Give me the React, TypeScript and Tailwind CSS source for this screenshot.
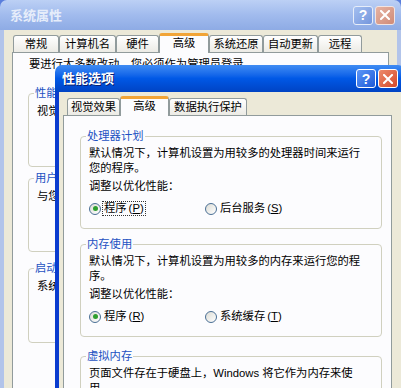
import React from 'react';

type TabProps = { label: string; w: string; active?: boolean };

const Tab: React.FC<TabProps> = ({ label, w, active }) =>
  active ? (
    <div className={`relative z-10 -mb-px flex h-[20px] items-center justify-center rounded-t-[3px] border-x border-t-[3px] border-x-[#919b9c] border-t-[#f1a437] bg-[#fcfcfe] pb-[2px] ${w}`}>
      {label}
    </div>
  ) : (
    <div className={`flex h-[17px] items-center justify-center rounded-t-[3px] border-x border-t border-[#919b9c] bg-gradient-to-b from-white to-[#ecebe5] ${w}`}>
      {label}
    </div>
  );

const CloseGlyph: React.FC = () => (
  <svg width="10" height="10" viewBox="0 0 10 10">
    <path d="M1 1 L9 9 M9 1 L1 9" stroke="white" strokeWidth="2" strokeLinecap="square" />
  </svg>
);

const TitleButtons: React.FC<{ active?: boolean }> = ({ active }) => (
  <div className="ml-auto flex gap-[2px]">
    <div
      className={`flex h-[19px] w-[20px] items-center justify-center rounded-[3px] border text-[14px] font-bold leading-none text-white ${
        active ? 'border-white bg-gradient-to-br from-[#5c96f7] to-[#1f5ad8]' : 'border-[#e6edf9] bg-gradient-to-br from-[#a4bff0] to-[#7596dc]'
      }`}
    >
      ?
    </div>
    <div
      className={`flex h-[19px] w-[20px] items-center justify-center rounded-[3px] border ${
        active ? 'border-white bg-gradient-to-br from-[#ec8a6b] to-[#d4482a]' : 'border-[#f1e4e2] bg-gradient-to-br from-[#e6b3a3] to-[#cf8b78]'
      }`}
    >
      <CloseGlyph />
    </div>
  </div>
);

const GroupBox: React.FC<{ label: string; className?: string; children?: React.ReactNode }> = ({ label, className, children }) => (
  <div className={`relative rounded-[4px] border border-[#d0d0bf] ${className ?? ''}`}>
    <span className="absolute -top-[8px] left-[5px] bg-[#fcfcfe] px-[1px] leading-[15px] text-[#1d52c2]">{label}</span>
    {children}
  </div>
);

const Radio: React.FC<{ label: string; mn: string; checked?: boolean; focused?: boolean }> = ({ label, mn, checked, focused }) => (
  <div className="flex items-center">
    <span className="flex h-[12px] w-[12px] items-center justify-center rounded-full border border-[#4a6f95] bg-gradient-to-br from-[#dcdcd5] to-white">
      {checked && <span className="h-[5px] w-[5px] rounded-full bg-[#2e9f2e]" />}
    </span>
    <span className={`ml-[1px] flex h-[15px] items-center border border-dotted px-[1px] ${focused ? 'border-[#333]' : 'border-transparent'}`}>
      {label}
      <span className="ml-[2px]">
        (<span className="underline">{mn}</span>)
      </span>
    </span>
  </div>
);

const PerfGroup: React.FC<{ label: string; lines: string[]; r1: [string, string]; r2: [string, string]; className?: string }> = ({
  label,
  lines,
  r1,
  r2,
  className,
}) => (
  <GroupBox label={label} className={`pb-[11px] pl-[8px] pt-[9px] ${className ?? ''}`}>
    {lines.map((l) => (
      <div key={l}>{l}</div>
    ))}
    <div className="mt-[3px]">调整以优化性能：</div>
    <div className="mt-[6px] flex h-[17px] items-center">
      <div className="w-[116px]">
        <Radio label={r1[0]} mn={r1[1]} checked focused={r1[1] === 'P'} />
      </div>
      <Radio label={r2[0]} mn={r2[1]} />
    </div>
  </GroupBox>
);

const BackWindow: React.FC = () => (
  <div className="absolute left-0 top-0 flex h-[400px] w-[401px] flex-col">
    <div className="flex h-[30px] shrink-0 items-center rounded-t-[7px] bg-gradient-to-b from-[#bcd0f5] via-[#a1bbed] to-[#8eabe5] pl-[10px] pr-[6px]">
      <span className="text-[13px] font-bold text-[#e6edfa]">系统属性</span>
      <TitleButtons />
    </div>
    <div className="flex-1 border-x-[4px] border-[#b2c4ea] bg-[#ece9d8] pl-[8px] pt-[3px]">
      <div className="flex h-[19px] items-end pl-[1px]">
        <Tab label="常规" w="w-[46px]" />
        <Tab label="计算机名" w="w-[57px]" />
        <Tab label="硬件" w="w-[43px]" />
        <Tab label="高级" w="w-[50px]" active />
        <Tab label="系统还原" w="w-[54px]" />
        <Tab label="自动更新" w="w-[55px]" />
        <Tab label="远程" w="w-[44px]" />
      </div>
      <div className="h-[340px] w-[377px] border border-[#919b9c] bg-[#fcfcfe] pl-[15px] pt-[4px]">
        <div className="pl-[1px]">要进行大多数改动，您必须作为管理员登录。</div>
        <GroupBox label="性能" className="mt-[21px] h-[74px] w-[345px] pl-[8px] pt-[10px]">
          <div>视觉效果，处理器计划，内存使用，以及虚拟内存</div>
        </GroupBox>
        <GroupBox label="用户配置文件" className="mt-[11px] h-[74px] w-[345px] pl-[8px] pt-[10px]">
          <div>与您登录有关的桌面设置</div>
        </GroupBox>
        <GroupBox label="启动和故障恢复" className="mt-[16px] h-[75px] w-[345px] pl-[8px] pt-[10px]">
          <div>系统启动、系统失败和调试信息</div>
        </GroupBox>
      </div>
    </div>
  </div>
);

const FrontWindow: React.FC = () => (
  <div className="absolute left-[55px] top-[65px] flex h-[360px] w-[350px] flex-col">
    <div className="flex h-[27px] shrink-0 items-center rounded-t-[7px] bg-gradient-to-b from-[#3f8cf3] via-[#0058e6] to-[#0043c4] pl-[7px] pr-[7px]">
      <span className="text-[13px] font-bold text-white [text-shadow:1px_1px_#0a1e6e]">性能选项</span>
      <TitleButtons active />
    </div>
    <div className="flex-1 border-l-[4px] border-[#0a3ccf] bg-[#ece9d8] pl-[4px] pt-[3px]">
      <div className="flex h-[20px] items-end pl-[4px]">
        <Tab label="视觉效果" w="w-[53px]" />
        <Tab label="高级" w="w-[49px]" active />
        <Tab label="数据执行保护" w="w-[78px]" />
      </div>
      <div className="h-[300px] w-[329px] border border-[#919b9c] bg-[#fcfcfe] pl-[16px] pt-[20px]">
        <PerfGroup
          label="处理器计划"
          className="w-[302px]"
          lines={['默认情况下，计算机设置为用较多的处理器时间来运行', '您的程序。']}
          r1={['程序', 'P']}
          r2={['后台服务', 'S']}
        />
        <PerfGroup
          label="内存使用"
          className="mt-[15px] w-[302px]"
          lines={['默认情况下，计算机设置为用较多的内存来运行您的程', '序。']}
          r1={['程序', 'R']}
          r2={['系统缓存', 'T']}
        />
        <GroupBox label="虚拟内存" className="mt-[19px] h-[80px] w-[302px] pl-[8px] pt-[9px]">
          <div>页面文件存在于硬盘上，Windows 将它作为内存来使</div>
          <div>用。</div>
        </GroupBox>
      </div>
    </div>
  </div>
);

export default function App() {
  return (
    <div className="relative h-[388px] w-[401px] overflow-hidden bg-[#5a7edc] font-['Liberation_Sans','Noto_Sans_CJK_SC',sans-serif] text-[11.3px] leading-[15px] text-black">
      <BackWindow />
      <FrontWindow />
    </div>
  );
}
